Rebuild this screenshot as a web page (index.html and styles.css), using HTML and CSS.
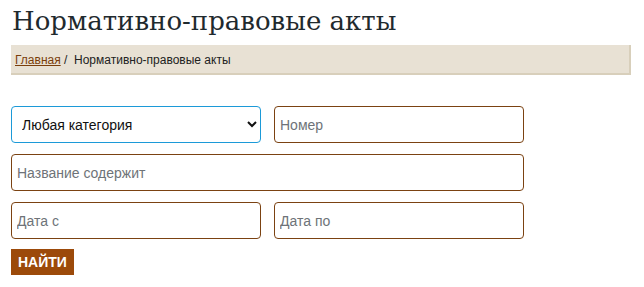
FILE: index.html
```html
<!DOCTYPE html>
<html lang="ru">
<head>
    <meta charset="UTF-8">
    <meta name="viewport" content="width=device-width, initial-scale=1.0">
    <title>Нормативно-правовые акты</title>
    <link rel="stylesheet" href="styles.css">
</head>
<body>
    <div class="page">
        <h1 class="title">Нормативно-правовые акты</h1>

        <div class="breadcrumb">
            <a href="#" class="crumb-link">Главная</a> / &nbsp;Нормативно-правовые акты
        </div>

        <form class="search-form" onsubmit="return false">
            <select class="field field-select">
                <option>Любая категория</option>
            </select>
            <input type="text" class="field" placeholder="Номер">
            <input type="text" class="field field-wide" placeholder="Название содержит">
            <input type="text" class="field" placeholder="Дата с">
            <input type="text" class="field" placeholder="Дата по">
            <div class="actions">
                <button class="find-btn">НАЙТИ</button>
            </div>
        </form>
    </div>
</body>
</html>
```

FILE: styles.css
```css
body { margin: 0; font-family: "Liberation Sans", Arial, sans-serif; background: #fff; color: #222; }
.page { padding: 0 13px 0 11px; }
.title { font-family: "DejaVu Serif", Georgia, serif; font-weight: normal; font-size: 26px; color: #1f2a2e; margin: 0; padding: 6px 0 0 1px; height: 39px; }
.breadcrumb { background: #e8e1d4; border-bottom: 2px solid #d8cfbb; border-right: 2px solid #d8cfbb; height: 28px; line-height: 30px; padding-left: 4px; font-size: 12px; color: #222; }
.crumb-link { color: #7a3e0b; }
.search-form { display: grid; grid-template-columns: 250px 250px; column-gap: 13px; row-gap: 11px; margin-top: 31px; width: 513px; }
.field { box-sizing: border-box; height: 37px; border: 1px solid #7b4212; border-radius: 4px; padding: 0 5px; font-family: "Liberation Sans", Arial, sans-serif; font-size: 14px; background: #fff; color: #111; }
.field::placeholder { color: #6e7378; }
.field-select { border-color: #1c9ad8; padding-left: 6px; }
.field-wide { grid-column: 1 / 3; }
.actions { grid-column: 1 / 3; margin-top: -1px; }
.find-btn { background: #9c4a0a; color: #fff; border: none; border-radius: 0; height: 26px; padding: 0 7px; font-family: "Liberation Sans", Arial, sans-serif; font-weight: bold; font-size: 14px; cursor: pointer; }
```
